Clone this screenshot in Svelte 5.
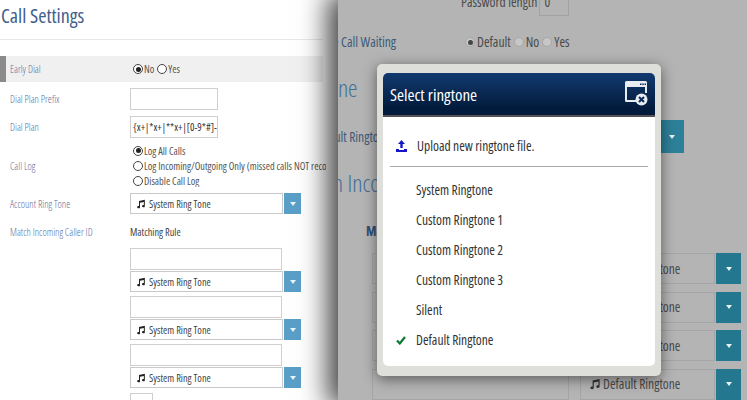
<script>
  const tones = ['System Ringtone', 'Custom Ringtone 1', 'Custom Ringtone 2', 'Custom Ringtone 3', 'Silent', 'Default Ringtone'];
  const selected = 'Default Ringtone';
  const rules = ['', '', ''];
  const bgRules = ['Default Ringtone', 'Default Ringtone', 'Default Ringtone', 'Default Ringtone'];
</script>

{#snippet note(size)}
  <svg class="note" width={size} height={size} viewBox="0 0 12 12" aria-hidden="true">
    <path d="M3.600 2.400 10.600 1v7.600a1.700 1.400 0 1 1-1.200-1.300V3.600L4.800 4.600v5.200a1.700 1.400 0 1 1-1.200-1.300z" fill="currentColor" />
  </svg>
{/snippet}

<div class="page">
  <section class="settings">
    <h1>Call Settings</h1>
    <hr />

    <div class="row early">
      <span class="label">Early Dial</span>
      <span class="radios">
        <i class="radio on"></i><span>No</span>
        <i class="radio"></i><span>Yes</span>
      </span>
    </div>

    <div class="row tall">
      <span class="label">Dial Plan Prefix</span>
      <span class="input"></span>
    </div>

    <div class="row tall">
      <span class="label">Dial Plan</span>
      <span class="input plan">&#123;x+|*x+|**x+|[0-9*#]-</span>
    </div>

    <div class="row log">
      <span class="label">Call Log</span>
      <div class="loglist">
        <span class="radios"><i class="radio on"></i><span>Log All Calls</span></span>
        <span class="radios"><i class="radio"></i><span>Log Incoming/Outgoing Only (missed calls NOT recorded)</span></span>
        <span class="radios"><i class="radio"></i><span>Disable Call Log</span></span>
      </div>
    </div>

    <div class="row ring">
      <span class="label">Account Ring Tone</span>
      <div class="select">
        <span class="box">{@render note(10)} System Ring Tone</span>
        <span class="btn"></span>
      </div>
    </div>

    <div class="row match">
      <span class="label">Match Incoming Caller ID</span>
      <span class="rule">Matching Rule</span>
    </div>

    <div class="rules">
      {#each rules as _}
        <span class="input wide"></span>
        <div class="select">
          <span class="box">{@render note(10)} System Ring Tone</span>
          <span class="btn"></span>
        </div>
      {/each}
    </div>

    <div class="row stir">
      <span class="label">Stir Flow</span>
      <span class="input tiny"></span>
    </div>
  </section>

  <section class="backdrop">
    <div class="bg-inner">
      <div class="pw">
        <span>Password length</span>
        <span class="pw-box">0</span>
      </div>
      <div class="bg-row waiting">
        <span class="bg-label">Enable Call Waiting</span>
        <span class="bg-radios">
          <i class="radio dim on"></i><span>Default</span>
          <i class="radio dim"></i><span>No</span>
          <i class="radio dim"></i><span>Yes</span>
        </span>
      </div>
      <h2 class="h-ring">Ringtone</h2>
      <div class="bg-row default">
        <span class="bg-label">Default Ringtone</span>
        <span class="bg-btn big"></span>
      </div>
      <h2 class="h-match">Match Incoming Calls</h2>
      <div class="bg-rule">Matching Rule</div>
      <div class="bg-rows">
        {#each bgRules as tone}
          <div class="bg-rule-row">
            <span class="bg-input"></span>
            <span class="bg-select">{@render note(12)} <span>{tone}</span></span>
            <span class="bg-btn"></span>
          </div>
        {/each}
      </div>
    </div>

    <div class="modal">
      <div class="modal-in">
        <header>
          <span>Select ringtone</span>
          <svg width="24" height="30" viewBox="0 0 24 30" aria-hidden="true">
            <path d="M1 3.500A1.500 1.500 0 0 1 2.500 2h19A1.500 1.500 0 0 1 23 3.500V14h-2V8H3v13h9v2H2.500A1.500 1.500 0 0 1 1 21.500z" fill="#e9edf2" />
            <path d="M16 4.500h1.500V6H16zm2.300 0h1.500V6h-1.500zm2.300 0H22V6h-1.400z" fill="#0b2a55" />
            <circle cx="17.500" cy="20.500" r="6" fill="#e9edf2" />
            <path d="m15 18 5 5m0-5-5 5" stroke="#0b2a55" stroke-width="2" />
          </svg>
        </header>
        <div class="upload">
          <svg width="11" height="12" viewBox="0 0 11 12" aria-hidden="true">
            <path d="M5.500 0 9 4H6.700v4H4.300V4H2zM0 9h3v1h5V9h3v3H0z" fill="#1616c8" />
          </svg>
          <span>Upload new ringtone file.</span>
        </div>
        <ul>
          {#each tones as tone}
            <li>
              <span class="tick">
                {#if tone === selected}
                  <svg width="10" height="9" viewBox="0 0 10 9" aria-hidden="true">
                    <path d="M1 4.500 3.800 7.500 9 1" fill="none" stroke="#0c7a35" stroke-width="2.200" />
                  </svg>
                {/if}
              </span>
              <span>{tone}</span>
            </li>
          {/each}
        </ul>
      </div>
    </div>
  </section>
</div>

<style>
  :global(body) {
    margin: 0;
    background: #fff;
  }

  .page {
    display: flex;
    width: 747px;
    height: 400px;
    overflow: hidden;
    position: relative;
    font-family: "Open Sans", sans-serif;
    font-stretch: 75%;
  }

  /* left page */
  .settings {
    width: 338px;
    flex-shrink: 0;
    overflow: hidden;
    color: #5a6f9c;
    font-size: 10.300px;
  }

  h1 {
    margin: 0;
    padding: 2px 0 0 1px;
    height: 34px;
    box-sizing: border-box;
    font-size: 20px;
    font-weight: 400;
    color: #3f5f8c;
    white-space: nowrap;
  }

  hr {
    margin: 5px 15px 16px 0;
    border: 0;
    border-top: 1px solid #e8e8e8;
  }

  .row {
    display: grid;
    grid-template-columns: 130px 1fr;
    align-items: center;
    padding-left: 10px;
    box-sizing: border-box;
    white-space: nowrap;
  }

  .label {
    display: block;
    font-size: 10.200px;
    font-weight: 300;
  }

  .row > :not(.label) {
    margin-left: -10px;
  }

  .early {
    height: 26px;
    width: 323px;
    background: #f0f0f0;
    border-left: 6px solid #8a8a8a;
    padding-left: 4px;
    margin-bottom: 3px;
  }

  .radios {
    display: flex;
    align-items: center;
    gap: 1px;
    color: #555;
    white-space: nowrap;
  }

  .early .radios {
    padding-left: 3px;
  }

  .radios > span + .radio {
    margin-left: 2px;
  }

  .radio {
    width: 8px;
    height: 8px;
    border: 1px solid #444;
    border-radius: 50%;
    box-sizing: content-box;
    display: inline-block;
    position: relative;
    flex-shrink: 0;
    background: #fff;
  }

  .radio.on::after {
    content: "";
    position: absolute;
    inset: 1.500px;
    border-radius: 50%;
    background: #222;
  }

  .tall {
    height: 28px;
  }

  .input {
    display: block;
    width: 88px;
    height: 22px;
    box-sizing: border-box;
    border: 1px solid #cfcfcf;
    background: #fff;
    color: #333;
    line-height: 20px;
    padding-left: 2px;
    overflow: hidden;
    white-space: nowrap;
  }

  .plan {
    font-size: 10.500px;
  }

  .log {
    height: 45px;
    margin-top: 2px;
    margin-bottom: 5px;
    overflow: hidden;
  }

  .loglist {
    display: flex;
    flex-direction: column;
    gap: 2px;
    padding-left: 3px;
    width: 193px;
    overflow: hidden;
  }

  .loglist .radios {
    height: 13px;
  }

  .ring {
    height: 21px;
    margin-bottom: 8px;
  }

  .select {
    display: flex;
    gap: 1px;
    height: 21px;
  }

  .box {
    width: 153px;
    box-sizing: border-box;
    border: 1px solid #c9c9c9;
    display: flex;
    align-items: center;
    gap: 3px;
    padding-left: 5px;
    color: #444;
    background: #fff;
  }

  .btn {
    width: 17px;
    background: #5a9fc7;
    display: flex;
    align-items: center;
    justify-content: center;
  }

  .btn::after, .bg-btn::after {
    content: "";
    border: 3px solid transparent;
    border-top: 4px solid #e8f2f8;
    border-bottom: 0;
  }

  .note {
    color: #222;
    flex-shrink: 0;
  }

  .match {
    height: 20px;
    margin-bottom: 6px;
  }

  .rule {
    color: #444;
  }

  .rules {
    margin-left: 130px;
    display: flex;
    flex-direction: column;
  }

  .wide {
    width: 152px;
    height: 22px;
  }

  .rules .select {
    margin: 1px 0 4px;
  }

  .stir {
    margin-top: 1px;
    height: 20px;
    align-items: start;
  }

  .stir .label {
    padding-top: 7px;
  }

  .tiny {
    width: 23px;
  }

  /* dimmed page behind the dialog */
  .backdrop {
    position: relative;
    flex: 1;
    min-width: 0;
    background: #b4b4b4;
    box-shadow: -4px 0 26px 6px rgba(0, 0, 0, 0.75);
    color: #4a4a4a;
    font-size: 13.500px;
  }

  .bg-inner {
    overflow: hidden;
    height: 400px;
    white-space: nowrap;
  }

  .pw {
    display: flex;
    gap: 2px;
    margin-left: 123px;
    margin-top: -12px;
    height: 28px;
    line-height: 28px;
  }

  .pw-box {
    width: 30px;
    height: 28px;
    border: 1px solid #a2a2a2;
    box-sizing: border-box;
    padding-left: 4px;
    line-height: 26px;
  }

  .bg-row {
    display: flex;
    align-items: center;
  }

  .bg-label {
    width: 127px;
    margin-left: -31px;
    flex-shrink: 0;
    color: #3d5a78;
    text-align: left;
  }

  .waiting {
    height: 28px;
    margin-top: 12px;
  }

  .bg-radios {
    display: flex;
    align-items: center;
    gap: 2px;
    margin-left: 31px;
  }

  .bg-radios > span {
    margin-right: 1px;
  }

  .radio.dim {
    background: #c6c6c6;
    border-color: #a6a6a6;
  }

  .radio.dim.on::after {
    background: #444;
  }

  h2 {
    margin: 0;
    font-weight: 300;
    color: #3e6f95;
    font-size: 24px;
    line-height: 30px;
  }

  .h-ring {
    margin-top: 17px;
    margin-left: -49px;
  }

  .default {
    height: 33px;
    margin-top: 17px;
  }

  .default .bg-label {
    width: 346px;
    margin-left: -25px;
  }

  .bg-btn {
    width: 25px;
    height: 31px;
    background: #23778f;
    display: flex;
    align-items: center;
    justify-content: center;
    flex-shrink: 0;
  }

  .big {
    width: 25px;
    height: 33px;
    background: #2d8099;
  }

  .h-match {
    margin-top: 15px;
    margin-left: -44px;
  }

  .bg-rule {
    margin: 23px 0 0 28px;
    color: #2f4f76;
    font-weight: 700;
    height: 20px;
    line-height: 20px;
  }

  .bg-rows {
    margin-top: 12px;
    margin-left: 34px;
    display: flex;
    flex-direction: column;
    gap: 7.500px;
  }

  .bg-rule-row {
    display: flex;
    height: 31px;
  }

  .bg-input {
    width: 197px;
    border: 1px solid #a5a5a5;
    box-sizing: border-box;
  }

  .bg-select {
    width: 135px;
    margin-left: 11px;
    margin-right: 1px;
    border: 1px solid #a5a5a5;
    box-sizing: border-box;
    display: flex;
    align-items: center;
    gap: 2px;
    padding-left: 8px;
  }

  .bg-select .note {
    color: #333;
  }

  /* dialog */
  .modal {
    position: absolute;
    left: 39px;
    top: 64px;
    width: 284px;
    height: 312px;
    box-sizing: border-box;
    padding: 9px 6px 10px;
    background: #dedfdb;
    border-radius: 5px;
    box-shadow: 0 3px 14px rgba(0, 0, 0, 0.5);
    color: #333;
    font-size: 13.500px;
  }

  .modal-in {
    background: #fff;
    border-radius: 5px;
    height: 100%;
    overflow: hidden;
  }

  header {
    height: 44px;
    box-sizing: border-box;
    background: linear-gradient(#123a70, #021b3c 85%);
    border-bottom: 2px solid #555;
    display: flex;
    align-items: center;
    justify-content: space-between;
    padding: 0 7px 0 7px;
    color: #fff;
    font-size: 17px;
  }

  .upload {
    height: 50px;
    margin: 0 7px;
    display: flex;
    align-items: center;
    gap: 10px;
    padding-top: 9px;
    box-sizing: border-box;
    border-bottom: 1px solid #aaa;
  }

  .upload svg {
    margin-left: 6px;
  }

  ul {
    list-style: none;
    margin: 0;
    padding: 8px 0 0;
  }

  li {
    height: 30px;
    display: flex;
    align-items: center;
    padding-left: 13px;
  }

  .tick {
    width: 20px;
    display: flex;
  }
</style>
